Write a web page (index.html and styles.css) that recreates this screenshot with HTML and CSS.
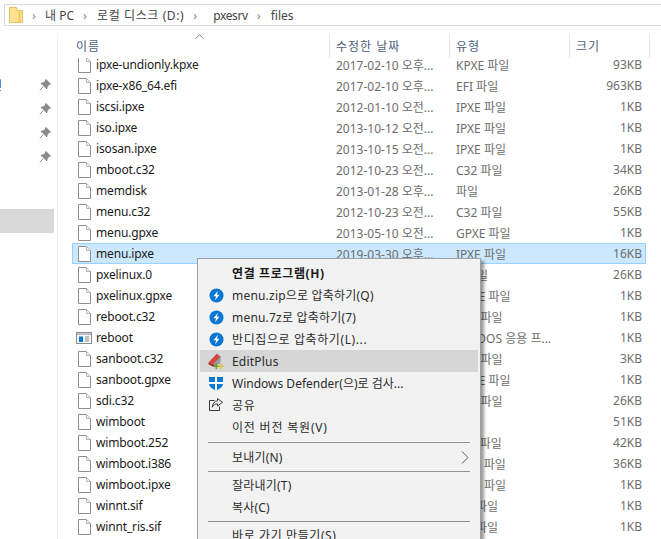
FILE: index.html
```html
<!DOCTYPE html>
<html lang="ko">
<head>
    <meta charset="UTF-8">
    <title>files</title>
    <link rel="stylesheet" href="styles.css">
</head>
<body>
    <svg class="defs" width="0" height="0">
        <symbol id="file" viewBox="0 0 13 16">
            <path d="M.5.5h8l4 4v11H.5z" fill="#fff" stroke="#8e8e8e"/>
            <path d="M8.500.5v4h4" fill="#f2f2f2" stroke="#b5b5b5"/>
        </symbol>
        <symbol id="bolt" viewBox="0 0 16 16">
            <circle cx="8" cy="8" r="7.500" fill="#0a78d2"/>
            <path d="M9.500 3 4.800 8.800h2.700L6.500 13l4.700-5.900H8.500z" fill="#fff"/>
        </symbol>
        <symbol id="pin" viewBox="0 0 12 12">
            <path d="M7 .5 11.500 5 10 5.600 8.200 7.400 7.800 10 2 4.200 4.600 3.800 6.400 2zM4 8 .8 11.200" fill="#8b8b8b" stroke="#8b8b8b"/>
        </symbol>
    </svg>

    <div class="address">
        <svg class="folder" width="14" height="16" viewBox="0 0 14 16">
            <path d="M.5.5h7l1 3h5v12H.5z" fill="#fde28f" stroke="#e0c063"/>
            <path d="M10.500 4v11.500" stroke="#f3c95f" stroke-width="2"/>
        </svg>
        <span class="crumb-arrow first">&rsaquo;</span>
        <span class="crumb">내 PC</span>
        <span class="crumb-arrow">&rsaquo;</span>
        <span class="crumb ko">로컬 디스크 (D:)</span>
        <span class="crumb-arrow">&rsaquo;</span>
        <span class="crumb wide">pxesrv</span>
        <span class="crumb-arrow">&rsaquo;</span>
        <span class="crumb">files</span>
    </div>

    <div class="main">
        <div class="sidebar">
            <div class="nav-row"><span class="nav-label"><span>바탕 화면</span></span><svg class="pin"><use href="#pin"/></svg></div>
            <div class="nav-row"><svg class="pin"><use href="#pin"/></svg></div>
            <div class="nav-row"><svg class="pin"><use href="#pin"/></svg></div>
            <div class="nav-row"><svg class="pin"><use href="#pin"/></svg></div>
            <div class="nav-selected"></div>
        </div>

        <div class="files">
            <div class="header">
                <div class="col first">이름<svg class="sort" width="9" height="5" viewBox="0 0 9 5"><path d="M.5 4.500 4.500.8l4 3.700" fill="none" stroke="#8a8a8a"/></svg></div>
                <div class="col">수정한 날짜</div>
                <div class="col">유형</div>
                <div class="col size-col">크기</div>
            </div>
            <div class="list">
                <div class="row"><svg class="icon"><use href="#file"/></svg><span class="name">ipxe-undionly.kpxe</span><span class="date">2017-02-10 오후...</span><span class="type">KPXE 파일</span><span class="size">93KB</span></div>
                <div class="row"><svg class="icon"><use href="#file"/></svg><span class="name">ipxe-x86_64.efi</span><span class="date">2017-02-10 오후...</span><span class="type">EFI 파일</span><span class="size">963KB</span></div>
                <div class="row"><svg class="icon"><use href="#file"/></svg><span class="name">iscsi.ipxe</span><span class="date">2012-01-10 오전...</span><span class="type">IPXE 파일</span><span class="size">1KB</span></div>
                <div class="row"><svg class="icon"><use href="#file"/></svg><span class="name">iso.ipxe</span><span class="date">2013-10-12 오전...</span><span class="type">IPXE 파일</span><span class="size">1KB</span></div>
                <div class="row"><svg class="icon"><use href="#file"/></svg><span class="name">isosan.ipxe</span><span class="date">2013-10-15 오전...</span><span class="type">IPXE 파일</span><span class="size">1KB</span></div>
                <div class="row"><svg class="icon"><use href="#file"/></svg><span class="name">mboot.c32</span><span class="date">2012-10-23 오전...</span><span class="type">C32 파일</span><span class="size">34KB</span></div>
                <div class="row"><svg class="icon"><use href="#file"/></svg><span class="name">memdisk</span><span class="date">2013-01-28 오후...</span><span class="type">파일</span><span class="size">26KB</span></div>
                <div class="row"><svg class="icon"><use href="#file"/></svg><span class="name">menu.c32</span><span class="date">2012-10-23 오전...</span><span class="type">C32 파일</span><span class="size">55KB</span></div>
                <div class="row"><svg class="icon"><use href="#file"/></svg><span class="name">menu.gpxe</span><span class="date">2013-05-10 오전...</span><span class="type">GPXE 파일</span><span class="size">1KB</span></div>
                <div class="row selected"><svg class="icon"><use href="#file"/></svg><span class="name">menu.ipxe</span><span class="date">2019-03-30 오후...</span><span class="type">IPXE 파일</span><span class="size">16KB</span></div>
                <div class="row"><svg class="icon"><use href="#file"/></svg><span class="name">pxelinux.0</span><span class="date"></span><span class="type">0 파일</span><span class="size">26KB</span></div>
                <div class="row"><svg class="icon"><use href="#file"/></svg><span class="name">pxelinux.gpxe</span><span class="date"></span><span class="type">GPXE 파일</span><span class="size">1KB</span></div>
                <div class="row"><svg class="icon"><use href="#file"/></svg><span class="name">reboot.c32</span><span class="date"></span><span class="type">C32 파일</span><span class="size">1KB</span></div>
                <div class="row"><svg class="icon app" viewBox="0 0 16 12"><rect x=".5" y=".5" width="15" height="11" fill="#f4f4f4" stroke="#8e8e8e"/><rect x="1" y="1" width="14" height="2" fill="#b9c3cf"/><rect x="3" y="4.500" width="4" height="5.500" fill="#0a78d2"/><path d="M9 5h4M9 7h4M9 9h4" stroke="#8e8e8e"/></svg><span class="name">reboot</span><span class="date"></span><span class="type">MS-DOS 응용 프...</span><span class="size">1KB</span></div>
                <div class="row"><svg class="icon"><use href="#file"/></svg><span class="name">sanboot.c32</span><span class="date"></span><span class="type">C32 파일</span><span class="size">3KB</span></div>
                <div class="row"><svg class="icon"><use href="#file"/></svg><span class="name">sanboot.gpxe</span><span class="date"></span><span class="type">GPXE 파일</span><span class="size">1KB</span></div>
                <div class="row"><svg class="icon"><use href="#file"/></svg><span class="name">sdi.c32</span><span class="date"></span><span class="type">C32 파일</span><span class="size">26KB</span></div>
                <div class="row"><svg class="icon"><use href="#file"/></svg><span class="name">wimboot</span><span class="date"></span><span class="type">파일</span><span class="size">51KB</span></div>
                <div class="row"><svg class="icon"><use href="#file"/></svg><span class="name">wimboot.252</span><span class="date"></span><span class="type">252 파일</span><span class="size">42KB</span></div>
                <div class="row"><svg class="icon"><use href="#file"/></svg><span class="name">wimboot.i386</span><span class="date"></span><span class="type">I386 파일</span><span class="size">36KB</span></div>
                <div class="row"><svg class="icon"><use href="#file"/></svg><span class="name">wimboot.ipxe</span><span class="date"></span><span class="type">IPXE 파일</span><span class="size">1KB</span></div>
                <div class="row"><svg class="icon"><use href="#file"/></svg><span class="name">winnt.sif</span><span class="date"></span><span class="type">SIF 파일</span><span class="size">1KB</span></div>
                <div class="row"><svg class="icon"><use href="#file"/></svg><span class="name">winnt_ris.sif</span><span class="date"></span><span class="type">SIF 파일</span><span class="size">1KB</span></div>
            </div>
        </div>
    </div>

    <div class="menu">
        <div class="item bold ko"><span class="item-icon"></span>연결 프로그램(H)</div>
        <div class="item"><span class="item-icon"><svg width="15" height="15"><use href="#bolt"/></svg></span>menu.zip으로 압축하기(Q)</div>
        <div class="item"><span class="item-icon"><svg width="15" height="15"><use href="#bolt"/></svg></span>menu.7z로 압축하기(7)</div>
        <div class="item ko"><span class="item-icon"><svg width="15" height="15"><use href="#bolt"/></svg></span>반디집으로 압축하기(L)...</div>
        <div class="item hover"><span class="item-icon">
            <svg width="16" height="16" viewBox="0 0 16 16">
                <path d="M1 9.500 9 .5l4 3-1 7-4.500 2z" fill="#9a9a9a"/>
                <path d="M.5 9.500 8.500 1l3.500 3-7 7z" fill="#d9443f"/>
                <path d="M.5 9.500 5 11l2.500 1.500L6 14 .5 11.500z" fill="#a8302c"/>
                <path d="M5.500 12.500h2v-2h1.500v2h2V14H9v2H7.500v-2h-2z" fill="#5fa82f"/>
                <path d="M12 10.500h1.500v2h2V14h-2v2H12v-2h-1.500v-1.500H12z" fill="#e3c23a"/>
            </svg>
        </span>EditPlus</div>
        <div class="item flat"><span class="item-icon">
            <svg width="16" height="16" viewBox="0 0 16 16">
                <path d="M1 2h14v6.500c0 3.500-3.500 5.500-7 7-3.500-1.500-7-3.500-7-7z" fill="#0a78d2"/>
                <path d="M7 2h2v13.500H7zM1 7h14v2H1z" fill="#fff"/>
            </svg>
        </span>Windows Defender(으)로 검사...</div>
        <div class="item"><span class="item-icon">
            <svg width="16" height="16" viewBox="0 0 16 16" fill="none" stroke="#3a3a3a">
                <path d="M6.500 3.500h-5v10h10v-4"/>
                <path d="M9.500 1.500l5 3.800-5 3.700V6.800C7 6.800 5.200 8 4.300 10.200 4.500 6.500 6.500 4 9.500 3.800z"/>
            </svg>
        </span><span class="ko">공유</span></div>
        <div class="item ko wider"><span class="item-icon"></span>이전 버전 복원(V)</div>
        <div class="sep wide-sep"></div>
        <div class="item"><span class="item-icon"></span>보내기(N)<svg class="submenu" width="8" height="13" viewBox="0 0 8 13"><path d="M1 .5 7 6.500l-6 6" fill="none" stroke="#555"/></svg></div>
        <div class="sep"></div>
        <div class="item"><span class="item-icon"></span>잘라내기(T)</div>
        <div class="item"><span class="item-icon"></span>복사(C)</div>
        <div class="sep"></div>
        <div class="item ko"><span class="item-icon"></span>바로 가기 만들기(S)</div>
    </div>
</body>
</html>
```
FILE: styles.css
```css
html, body {
    margin: 0;
    padding: 0;
    height: 539px;
    overflow: hidden;
}
body {
    position: relative;
    background-color: #fff;
    color: #1a1a1a;
    font-family: "Noto Sans", "Noto Sans CJK KR", sans-serif;
    font-size: 12px;
}
.defs {
    display: block;
}

/* address bar */
.address {
    display: flex;
    align-items: center;
    box-sizing: border-box;
    height: 22px;
    margin: 4px 0 0 4px;
    border: 1px solid #d9d9d9;
    border-right: none;
    color: #444;
    white-space: nowrap;
}
.folder {
    margin-left: 4px;
    flex: none;
}
.crumb-arrow {
    width: 6px;
    margin: 0 8px 0 9px;
    color: #888;
    font-size: 13px;
    line-height: 1;
}
.crumb-arrow.first {
    margin-right: 7px;
}
.crumb.ko {
    letter-spacing: 0.6px;
}
.crumb.wide {
    margin-left: 6px;
    letter-spacing: -0.4px;
}

/* sidebar + file pane */
.main {
    display: flex;
    margin-top: 7px;
    height: 506px;
}
.sidebar {
    flex: none;
    box-sizing: border-box;
    width: 58px;
    padding-top: 40px;
    border-right: 1px solid #f0f0f0;
}
.nav-row {
    display: flex;
    align-items: center;
    justify-content: flex-end;
    height: 24px;
    width: 51px;
}
.nav-label {
    display: flex;
    justify-content: flex-end;
    width: 2px;
    margin-right: auto;
    overflow: hidden;
    white-space: nowrap;
    color: #333;
}
.pin {
    width: 12px;
    height: 12px;
}
.nav-selected {
    width: 54px;
    height: 24px;
    margin-top: 40px;
    background-color: #d9d9d9;
}
.files {
    flex: 1;
    min-width: 0;
    overflow: hidden;
}

/* column header */
.header {
    position: relative;
    z-index: 1;
    display: flex;
    height: 25px;
    margin-left: 14px;
    background-color: #fff;
    color: #4c607a;
    letter-spacing: 1px;
}
.col {
    display: flex;
    align-items: center;
    box-sizing: border-box;
    width: 120px;
    padding-left: 6px;
    border-right: 1px solid #e5e5e5;
}
.col.first {
    position: relative;
    width: 258px;
    padding-left: 4px;
}
.col.size-col {
    width: 80px;
}
.sort {
    position: absolute;
    left: 123px;
    top: 1px;
}

/* rows */
.list {
    margin: -4px 0 0 14px;
}
.row {
    display: flex;
    align-items: center;
    box-sizing: border-box;
    width: 574px;
    height: 21px;
    padding-left: 5px;
    border: 1px solid transparent;
    color: #6d6d6d;
    white-space: nowrap;
}
.row.selected {
    background-color: #cce8ff;
    border-color: #99d1ff;
}
.icon {
    flex: none;
    width: 13px;
    height: 16px;
    margin-right: 5px;
}
.icon.app {
    width: 16px;
    height: 12px;
    margin-left: -2px;
    margin-right: 4px;
}
.name {
    width: 240px;
    color: #1a1a1a;
    letter-spacing: -0.15px;
}
.date {
    width: 120px;
}
.type {
    width: 120px;
}
.size {
    width: 66px;
    text-align: right;
}

/* context menu */
.menu {
    position: absolute;
    left: 197px;
    top: 258px;
    box-sizing: border-box;
    width: 284px;
    height: 300px;
    padding: 3px 2px;
    background-color: #f2f2f2;
    border: 1px solid #a0a0a0;
    box-shadow: 3px 3px 3px rgba(0, 0, 0, 0.4);
    color: #2b2b2b;
}
.item {
    position: relative;
    display: flex;
    align-items: center;
    height: 22px;
    white-space: nowrap;
    letter-spacing: 0.2px;
}
.ko {
    letter-spacing: 0.6px;
}
.item.flat {
    letter-spacing: 0;
}
.item.wider {
    letter-spacing: 0.8px;
}
.item.bold {
    font-weight: bold;
    color: #1a1a1a;
}
.item.hover {
    background-color: #d6d6d6;
}
.item-icon {
    display: flex;
    align-items: center;
    justify-content: center;
    flex: none;
    width: 16px;
    height: 16px;
    margin: 0 8px 0 8px;
}
.submenu {
    position: absolute;
    right: 9px;
    top: 5px;
}
.sep {
    height: 1px;
    margin: 3px 8px 2px 8px;
    background-color: #919191;
}
.sep.wide-sep {
    margin: 4px 8px 3px 8px;
}
```
